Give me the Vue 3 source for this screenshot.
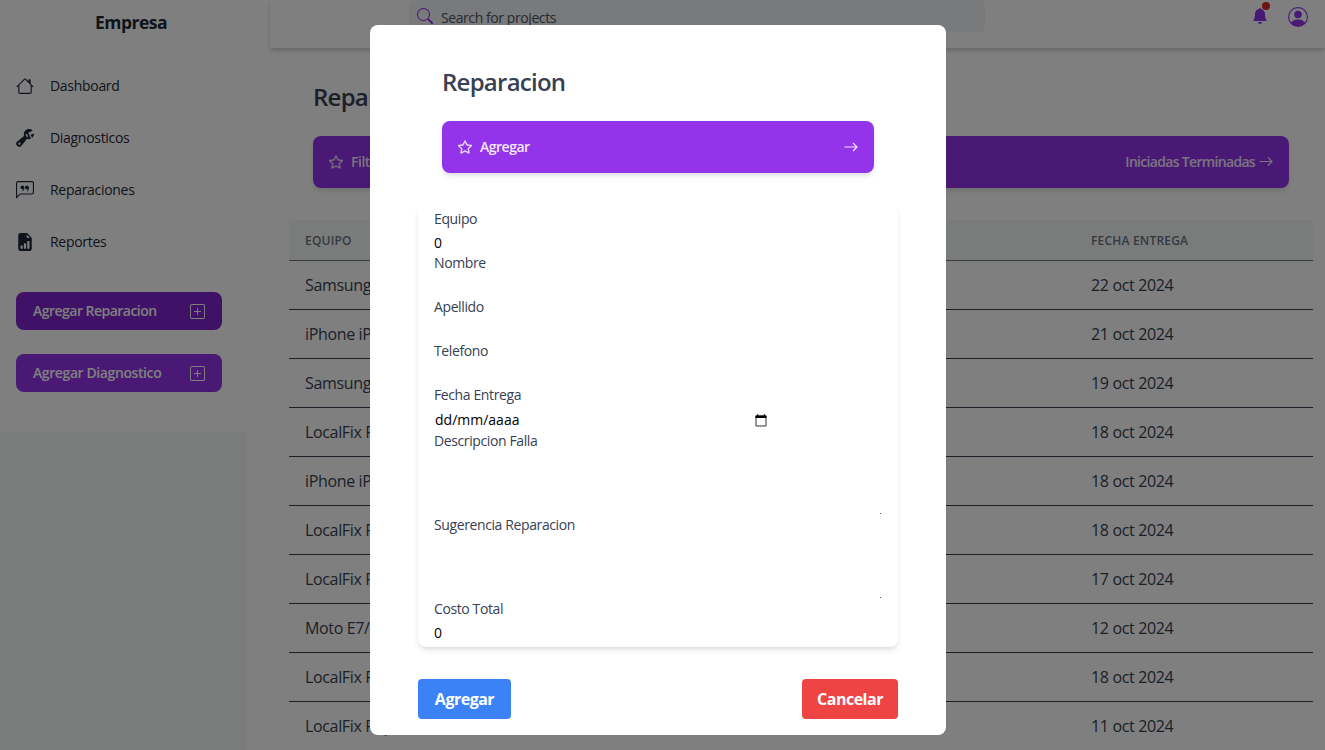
<script setup>
const icons = {
  house: ['M8.707 1.5a1 1 0 0 0-1.414 0L.646 8.146a.5.5 0 0 0 .708.708L2 8.207V13.5A1.5 1.5 0 0 0 3.5 15h9a1.5 1.5 0 0 0 1.5-1.5V8.207l.646.647a.5.5 0 0 0 .708-.708L13 5.793V2.5a.5.5 0 0 0-.5-.5h-1a.5.5 0 0 0-.5.5v1.293zM13 7.207V13.5a.5.5 0 0 1-.5.5h-9a.5.5 0 0 1-.5-.5V7.207l5-5z'],
  wrench: [
    'M16 4.5a4.5 4.5 0 0 1-1.703 3.526L13 5l2.959-1.11q.04.3.041.61',
    'M11.5 9c.653 0 1.273-.139 1.833-.39L12 5.5 11 3l3.826-1.53A4.5 4.5 0 0 0 7.29 6.092l-6.116 5.096a2.583 2.583 0 1 0 3.638 3.638L9.908 8.71A4.5 4.5 0 0 0 11.5 9m-1.292-4.361-.596.893.809-.27a.25.25 0 0 1 .287.377l-.596.893.809-.27.158.475-1.5.5a.25.25 0 0 1-.287-.376l.596-.893-.809.27a.25.25 0 0 1-.287-.377l.596-.893-.809.27-.158-.475 1.5-.5a.25.25 0 0 1 .287.376M3 14a1 1 0 1 1 0-2 1 1 0 0 1 0 2',
  ],
  quote: [
    'M14 1a1 1 0 0 1 1 1v8a1 1 0 0 1-1 1H4.414A2 2 0 0 0 3 11.586l-2 2V2a1 1 0 0 1 1-1zM2 0a2 2 0 0 0-2 2v12.793a.5.5 0 0 0 .854.353l2.853-2.853A1 1 0 0 1 4.414 12H14a2 2 0 0 0 2-2V2a2 2 0 0 0-2-2z',
    'M7.066 4.76A1.665 1.665 0 0 0 4 5.668a1.667 1.667 0 0 0 2.561 1.406c-.131.389-.375.804-.777 1.22a.417.417 0 1 0 .6.58c1.486-1.54 1.293-3.214.682-4.112zm4 0A1.665 1.665 0 0 0 8 5.668a1.667 1.667 0 0 0 2.561 1.406c-.131.389-.375.804-.777 1.22a.417.417 0 1 0 .6.58c1.486-1.54 1.293-3.214.682-4.112z',
  ],
  report: ['M9.293 0H4a2 2 0 0 0-2 2v12a2 2 0 0 0 2 2h8a2 2 0 0 0 2-2V4.707A1 1 0 0 0 13.707 4L10 .293A1 1 0 0 0 9.293 0M9.5 3.5v-2l3 3h-2a1 1 0 0 1-1-1m.5 10v-6a.5.5 0 0 1 .5-.5h1a.5.5 0 0 1 .5.5v6a.5.5 0 0 1-.5.5h-1a.5.5 0 0 1-.5-.5m-2.5.5a.5.5 0 0 1-.5-.5v-4a.5.5 0 0 1 .5-.5h1a.5.5 0 0 1 .5.5v4a.5.5 0 0 1-.5.5zm-3 0a.5.5 0 0 1-.5-.5v-2a.5.5 0 0 1 .5-.5h1a.5.5 0 0 1 .5.5v2a.5.5 0 0 1-.5.5z'],
  plus: [
    'M14 1a1 1 0 0 1 1 1v12a1 1 0 0 1-1 1H2a1 1 0 0 1-1-1V2a1 1 0 0 1 1-1zM2 0a2 2 0 0 0-2 2v12a2 2 0 0 0 2 2h12a2 2 0 0 0 2-2V2a2 2 0 0 0-2-2z',
    'M8 4a.5.5 0 0 1 .5.5v3h3a.5.5 0 0 1 0 1h-3v3a.5.5 0 0 1-1 0v-3h-3a.5.5 0 0 1 0-1h3v-3A.5.5 0 0 1 8 4',
  ],
  star: ['M2.866 14.85c-.078.444.36.791.746.593l4.39-2.256 4.389 2.256c.386.198.824-.149.746-.592l-.83-4.73 3.522-3.356c.33-.314.16-.888-.282-.95l-4.898-.696L8.465.792a.513.513 0 0 0-.927 0L5.354 5.12l-4.898.696c-.441.062-.612.636-.283.95l3.523 3.356-.83 4.73zm4.905-2.767-3.686 1.894.694-3.957a.56.56 0 0 0-.163-.505L1.71 6.745l4.052-.576a.53.53 0 0 0 .393-.288L8 2.223l1.847 3.658a.53.53 0 0 0 .393.288l4.052.575-2.906 2.77a.56.56 0 0 0-.163.506l.694 3.957-3.686-1.894a.5.5 0 0 0-.461 0z'],
  search: ['M11.742 10.344a6.5 6.5 0 1 0-1.397 1.398h-.001q.044.06.098.115l3.85 3.85a1 1 0 0 0 1.415-1.414l-3.85-3.85a1 1 0 0 0-.115-.1zM12 6.5a5.5 5.5 0 1 1-11 0 5.5 5.5 0 0 1 11 0'],
  bell: ['M8 16a2 2 0 0 0 2-2H6a2 2 0 0 0 2 2m.995-14.901a1 1 0 1 0-1.99 0A5 5 0 0 0 3 6c0 1.098-.5 6-2 7h14c-1.5-1-2-5.902-2-7 0-2.42-1.72-4.44-4.005-4.901'],
  person: ['M11 6a3 3 0 1 1-6 0 3 3 0 0 1 6 0', 'M0 8a8 8 0 1 1 16 0A8 8 0 0 1 0 8m8-7a7 7 0 0 0-5.468 11.37C3.242 11.226 4.805 10 8 10s4.757 1.225 5.468 2.37A7 7 0 0 0 8 1'],
}

const nav = [
  { label: 'Dashboard', icon: 'house' },
  { label: 'Diagnosticos', icon: 'wrench' },
  { label: 'Reparaciones', icon: 'quote' },
  { label: 'Reportes', icon: 'report' },
]

const rows = [
  ['Samsung', '22 oct 2024'],
  ['iPhone iPhone', '21 oct 2024'],
  ['Samsung', '19 oct 2024'],
  ['LocalFix Rep', '18 oct 2024'],
  ['iPhone iPhone', '18 oct 2024'],
  ['LocalFix Rep', '18 oct 2024'],
  ['LocalFix Rep', '17 oct 2024'],
  ['Moto E7/', '12 oct 2024'],
  ['LocalFix Rep', '18 oct 2024'],
  ['LocalFix Rep', '11 oct 2024'],
]

const fields = [
  { label: 'Equipo', value: '0', kind: 'text' },
  { label: 'Nombre', value: '', kind: 'text' },
  { label: 'Apellido', value: '', kind: 'text' },
  { label: 'Telefono', value: '', kind: 'text' },
  { label: 'Fecha Entrega', value: 'dd/mm/aaaa', kind: 'date' },
  { label: 'Descripcion Falla', value: '', kind: 'area' },
  { label: 'Sugerencia Reparacion', value: '', kind: 'area' },
  { label: 'Costo Total', value: '0', kind: 'text' },
]
</script>

<template>
  <div class="page">
    <aside class="sidebar">
      <div class="menu">
        <a class="brand">Empresa</a>
        <nav class="nav">
          <a v-for="n in nav" :key="n.label" class="nav-item">
            <svg class="nav-icon" viewBox="0 0 16 16"><path v-for="d in icons[n.icon]" :key="d" :d="d" fill-rule="evenodd" /></svg>
            <span>{{ n.label }}</span>
          </a>
        </nav>
        <button class="side-btn dark"><span>Agregar Reparacion</span><svg viewBox="0 0 16 16"><path v-for="d in icons.plus" :key="d" :d="d" /></svg></button>
        <button class="side-btn second"><span>Agregar Diagnostico</span><svg viewBox="0 0 16 16"><path v-for="d in icons.plus" :key="d" :d="d" /></svg></button>
      </div>
    </aside>

    <div class="content">
      <header class="header">
        <div class="search">
          <svg viewBox="0 0 16 16"><path :d="icons.search[0]" /></svg>
          <span>Search for projects</span>
        </div>
        <div class="actions">
          <div class="bell"><svg viewBox="0 0 16 16"><path :d="icons.bell[0]" /></svg><i class="dot"></i></div>
          <svg class="person" viewBox="0 0 16 16"><path :d="icons.person[0]" /><path :d="icons.person[1]" fill-rule="evenodd" /></svg>
        </div>
      </header>
      <main class="main">
        <h2 class="title">Reparaciones</h2>
        <div class="banner">
          <div class="banner-left"><svg class="star" viewBox="0 0 16 16"><path :d="icons.star[0]" /></svg><span>Filtrar</span></div>
          <div class="banner-right"><span class="states">Iniciadas Terminadas</span><svg class="arrow raised" viewBox="0 0 14 12"><path d="M.5 6.500H13M9 2.500 13 6.500l-4 4" /></svg></div>
        </div>
        <div class="table">
          <div class="row head"><span>EQUIPO</span><span>FECHA ENTREGA</span></div>
          <div v-for="(r, i) in rows" :key="i" class="row"><span>{{ r[0] }}</span><span>{{ r[1] }}</span></div>
        </div>
      </main>
    </div>

    <div class="overlay">
      <section class="modal">
        <h2 class="title modal-title">Reparacion</h2>
        <div class="banner modal-banner">
          <div class="banner-left"><svg class="star" viewBox="0 0 16 16"><path :d="icons.star[0]" /></svg><span>Agregar</span></div>
          <svg class="arrow" viewBox="0 0 14 12"><path d="M.5 6H13M9 2 13 6l-4 4" /></svg>
        </div>
        <form class="form">
          <label v-for="f in fields" :key="f.label" class="field" :class="f.kind">
            <span class="label">{{ f.label }}</span>
            <span class="control">
              <span>{{ f.value }}</span>
              <svg v-if="f.kind === 'date'" class="cal" viewBox="0 0 12 13"><path d="M1 2h10v10H1z" fill="none" stroke="#333" stroke-width="1" /><path d="M.5 1.500h11v2.500H.5zM2 .3h1.200V2H2zM8.800.3H10V2H8.800z" fill="#000" /></svg>
              <i v-if="f.kind === 'area'" class="grip"></i>
            </span>
          </label>
        </form>
        <div class="buttons">
          <button class="btn blue">Agregar</button>
          <button class="btn red">Cancelar</button>
        </div>
      </section>
    </div>
  </div>
</template>

<style>
body { margin: 0; overflow: hidden; }
</style>

<style scoped>
* { box-sizing: border-box; }
.page {
  position: relative;
  display: flex;
  width: 1325px;
  height: 750px;
  overflow: hidden;
  background: #fff;
  font-family: "Open Sans", "Noto Sans", sans-serif;
  color: #374151;
}
svg { display: block; fill: currentColor; flex: none; }
button { border: 0; font-family: inherit; }

.sidebar { width: 246px; flex: none; background: #f4f9f8; }
.menu { width: 256px; height: 432px; background: #fff; color: #1f2937; padding-top: 8px; }
.brand { display: block; padding-left: 95px; font-size: 17.500px; line-height: 28px; font-weight: 700; letter-spacing: -.5px; }
.nav { display: flex; flex-direction: column; margin-top: 24px; }
.nav-item { display: flex; align-items: center; height: 52px; padding-left: 16px; gap: 16px; font-size: 14px; font-weight: 500; letter-spacing: -.3px; }
.nav-item span { padding-bottom: 2px; }
.nav-icon { width: 18px; height: 18px; }
.side-btn {
  display: flex; align-items: center; justify-content: space-between;
  width: 206px; height: 38px; margin: 24px 0 0 16px; padding: 0 17px;
  border-radius: 8px; background: #9333ea; color: #fff;
  font-size: 14px; font-weight: 650; letter-spacing: -.52px;
}
.side-btn.second { letter-spacing: -.4px; }
.side-btn span { padding-bottom: 2px; }
.side-btn svg { width: 15px; height: 15px; }
.side-btn.dark { background: #7e22ce; }

.content { flex: 1; margin-left: 24px; display: flex; flex-direction: column; }
.header {
  display: flex; flex: none; height: 48px; padding-left: 139px;
  box-shadow: 0 4px 6px -1px rgba(0,0,0,.1), 0 2px 4px -1px rgba(0,0,0,.06), 0 2px 4px rgba(0,0,0,.08);
}
.search { display: flex; width: 576px; height: 32px; border-radius: 6px; background: #f3f4f6; padding: 0 8px; gap: 8px; font-size: 14px; line-height: 35px; letter-spacing: -.42px; color: #4b5563; }
.search svg { width: 16px; height: 16px; margin-top: 8px; color: #9333ea; }
.actions { display: flex; flex: 1; justify-content: flex-end; padding-right: 17px; gap: 20px; color: #9333ea; }
.bell { position: relative; width: 16px; height: 16px; margin-top: 8px; }
.dot { position: absolute; right: -2px; top: -6px; width: 8px; height: 8px; border-radius: 50%; background: #dc2626; }
.person { width: 20px; height: 20px; margin-top: 7px; }

.main { padding: 33px 12px 0 19px; }
.title { margin: 0 0 23px 24px; font-size: 24px; line-height: 32px; font-weight: 550; letter-spacing: -.75px; color: #374151; }
.banner {
  display: flex; align-items: center; justify-content: space-between;
  height: 52px; margin: 0 24px; padding: 0 16px; border-radius: 8px;
  background: #9333ea; color: #f3e8ff; font-size: 14px; font-weight: 650; letter-spacing: -.48px;
  box-shadow: 0 4px 6px -1px rgba(0,0,0,.1), 0 2px 4px -1px rgba(0,0,0,.06);
}
.banner span { padding-bottom: 1px; }
.banner-left { display: flex; align-items: center; gap: 8px; }
.banner-right { display: flex; align-items: center; gap: 4px; }
.states { letter-spacing: -.68px; }
.star { width: 14px; height: 14px; stroke: currentColor; stroke-width: .4; }
.arrow { width: 14px; height: 12px; fill: none; stroke: currentColor; stroke-width: 1.200; }
.arrow.raised { margin-bottom: 3px; }
.table { margin-top: 32px; }
.row { display: grid; grid-template-columns: 786px 1fr; padding: 0 16px; height: 49px; line-height: 49px; border-bottom: 1px solid #374151; font-size: 16px; letter-spacing: -.35px; }
.row.head { height: 41px; line-height: 41px; background: #f4f9f8; font-size: 12px; font-weight: 650; letter-spacing: .2px; color: #6b7280; border-color: #6b7280; }

.overlay { position: absolute; inset: 0; display: flex; justify-content: center; align-items: flex-start; padding: 25px 9px 0 0; background: rgba(0,0,0,.5); }
.modal { width: 576px; height: 710px; padding: 41px 48px 16px; border-radius: 8px; background: #fff; display: flex; flex-direction: column; }
.modal-title { flex: none; }
.modal-banner { flex: none; }
.form { flex: none; height: 442px; margin-top: 32px; padding: 4px 16px 0; border-radius: 8px; box-shadow: 0 4px 6px -1px rgba(0,0,0,.1), 0 2px 4px -1px rgba(0,0,0,.06); }
.field { display: block; height: 44px; font-size: 14px; line-height: 20px; letter-spacing: -.39px; }
.label { display: block; height: 20px; }
.control { display: flex; position: relative; height: 24px; padding-top: 4px; color: #000; }
.field.date { height: 46px; }
.date .control { justify-content: space-between; width: 335px; padding: 5px 2px 0 1px; letter-spacing: 0; }
.field.area { height: 84px; }
.cal { width: 12px; height: 13px; margin-top: 4px; }
.area .control { height: 64px; }
.grip { position: absolute; right: 1px; bottom: 1px; width: 1px; height: 1px; background: #555; }
.buttons { display: flex; justify-content: space-between; margin-top: 32px; }
.btn { height: 40px; padding: 0; border-radius: 4px; color: #fff; font-size: 16px; font-weight: 700; letter-spacing: -.5px; }
.blue { width: 93px; background: #3b82f6; }
.red { width: 96px; background: #ef4444; }
</style>
